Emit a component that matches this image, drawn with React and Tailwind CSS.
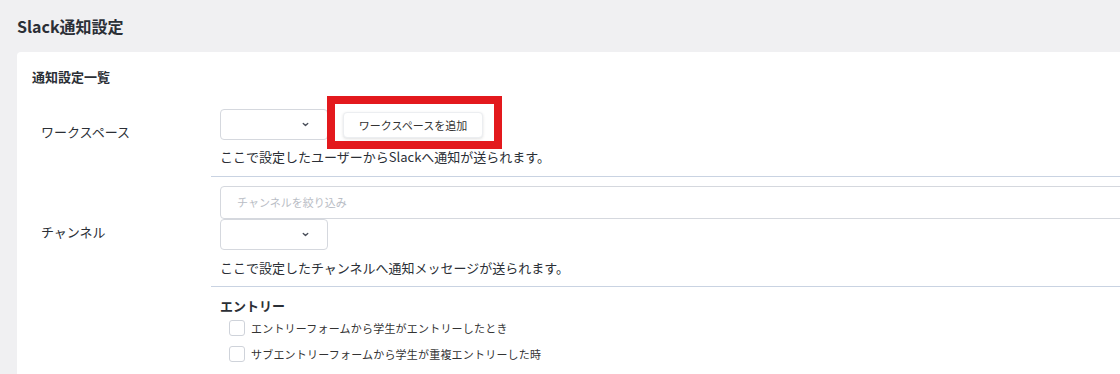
// Slack通知設定 — settings card
const FONT = '"Noto Sans CJK JP", "Noto Sans", sans-serif'

function Chevron() {
  return (
    <svg className="w-[9px] h-[9px] text-[#4a4f5a]" viewBox="0 0 10 10" fill="none">
      <path d="M2.5 3.8 5 6.2 7.5 3.8" stroke="currentColor" strokeWidth="1.5" strokeLinecap="round" strokeLinejoin="round" />
    </svg>
  )
}

function Select() {
  return (
    <div className="w-[108px] h-[31px] rounded-[4px] border border-[#d5d8de] bg-white flex items-center justify-end pr-[17px] shrink-0">
      <Chevron />
    </div>
  )
}

function Checkbox({ label }) {
  return (
    <label className="flex items-center gap-[6px] h-[26px] pl-[9px]">
      <span className="w-[16px] h-[16px] rounded-[3px] border border-[#cfd3da] bg-white shrink-0" />
      <span className="text-[11px] tracking-[0.2px] text-[#333]">{label}</span>
    </label>
  )
}

export default function App() {
  return (
    <div className="w-[1120px] h-[374px] overflow-hidden bg-[#f0f0f2] text-[#2b2f36] flex flex-col" style={{ fontFamily: FONT }}>
      <h1 className="pl-[17px] pt-[8px] h-[52px] shrink-0 text-[16px] font-bold leading-[36px]">Slack通知設定</h1>

      <div className="flex-1 ml-[17px] w-[1120px] bg-white rounded-tl-[4px] pt-[14px]">
        <h2 className="pl-[15px] text-[13px] font-bold leading-[22px]">通知設定一覧</h2>

        {/* ワークスペース */}
        <div className="mt-[9px] flex">
          <div className="w-[194px] shrink-0 pl-[24px] flex items-center text-[13px] pb-[10px]">ワークスペース</div>
          <div className="flex-1 border-b border-[#c9d3e2] pl-[9px] pt-[12px] pb-[10px]">
            <div className="flex items-center">
              <Select />
              <div className="relative ml-[15px]">
                <button className="w-[140px] h-[26px] rounded-[4px] bg-white border border-[#eceef1] shadow-[0_1px_3px_rgba(0,0,0,0.12)] text-[11px] text-[#333]">
                  ワークスペースを追加
                </button>
                <div className="absolute top-[-15px] bottom-[-11px] left-[-16px] right-[-19px] border-[8px] border-[#e3191d] pointer-events-none" />
              </div>
            </div>
            <p className="mt-[8px] text-[13px] leading-[18px] text-[#2b2f36]">ここで設定したユーザーからSlackへ通知が送られます。</p>
          </div>
        </div>

        {/* チャンネル */}
        <div className="flex">
          <div className="w-[194px] shrink-0 pl-[24px] flex items-center text-[13px]">チャンネル</div>
          <div className="flex-1 border-b border-[#c9d3e2] pl-[9px] pt-[9px] pb-[9px]">
            <div className="h-[33px] rounded-[4px] border border-[#d5d8de] flex items-center pl-[16px] text-[11px] text-[#b9bdc5]">
              チャンネルを絞り込み
            </div>
            <Select />
            <p className="mt-[9px] text-[13px] leading-[18px]">ここで設定したチャンネルへ通知メッセージが送られます。</p>
          </div>
        </div>

        {/* エントリー */}
        <div className="flex">
          <div className="w-[194px] shrink-0" />
          <div className="flex-1 pl-[9px] pt-[10px]">
            <p className="text-[13px] font-bold leading-[18px]">エントリー</p>
            <div>
              <Checkbox label="エントリーフォームから学生がエントリーしたとき" />
              <Checkbox label="サブエントリーフォームから学生が重複エントリーした時" />
            </div>
          </div>
        </div>
      </div>
    </div>
  )
}
